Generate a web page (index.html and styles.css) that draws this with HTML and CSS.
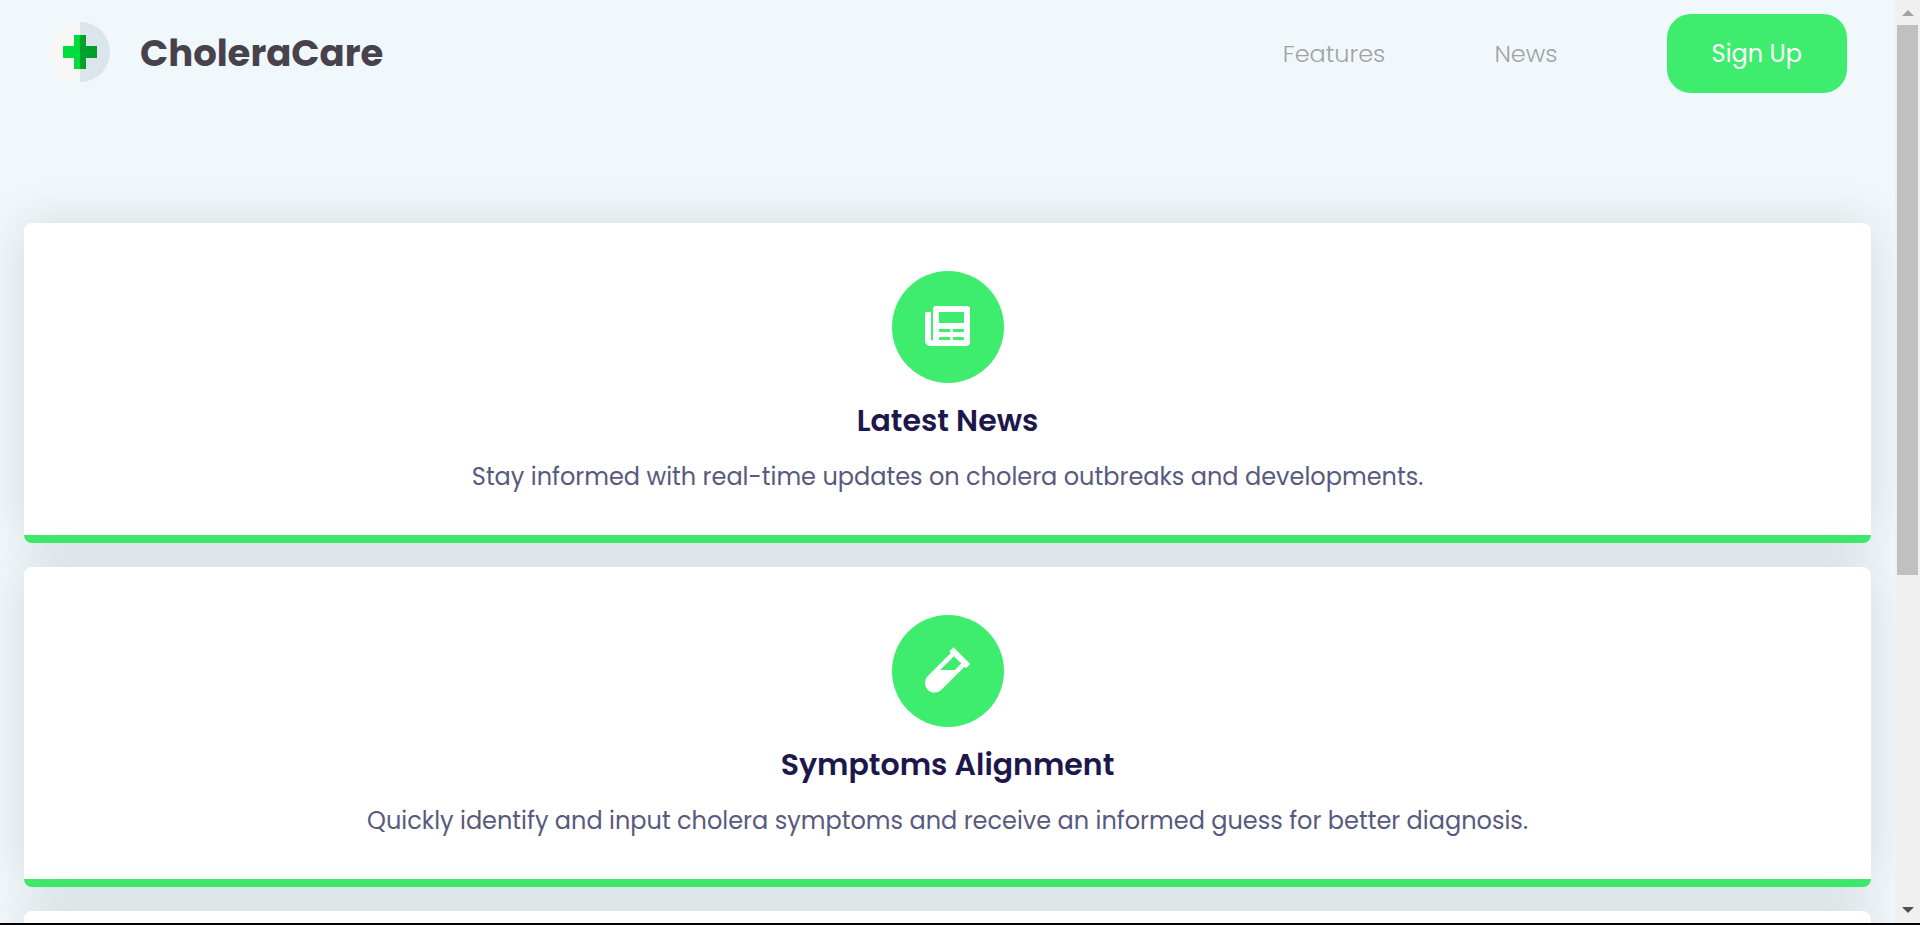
FILE: index.html
```html
<!DOCTYPE html>
<html lang="en">
<head>
<meta charset="utf-8">
<meta name="viewport" content="width=device-width, initial-scale=1">
<title>CholeraCare</title>
<link rel="stylesheet" href="styles.css">
</head>
<body>
<div class="shell">
  <div class="page">
    <header class="navbar">
      <a class="brand" href="#">
        <svg class="brand-logo" viewBox="0 0 60 60" aria-hidden="true">
          <path fill="#f7f7f8" d="M30 0a30 30 0 0 0 0 60z"/>
          <path fill="#dce4ec" d="M30 0a30 30 0 0 1 0 60z"/>
          <path fill="#00dc3c" d="M24 13h6v34h-6V36H13V24h11z"/>
          <path fill="#00a02d" d="M30 13h6v11h11v12H36v11h-6z"/>
        </svg>
        <span class="brand-name">CholeraCare</span>
      </a>
      <nav class="nav-links">
        <a class="nav-link" href="#features">Features</a>
        <a class="nav-link" href="#news">News</a>
        <button class="signup" type="button">Sign Up</button>
      </nav>
    </header>
    <main class="cards" id="features">
      <section class="card" id="news">
        <div class="card-icon">
          <svg width="45" height="40" viewBox="0 0 45 40" aria-hidden="true">
            <path fill="#fff" fill-rule="evenodd" d="M11 0h31a3 3 0 0 1 3 3v33a4 4 0 0 1-4 4H5a5 5 0 0 1-5-5V7.500a1.500 1.500 0 0 1 1.500-1.500H6v27.500a1 1 0 0 0 2 0V3a3 3 0 0 1 3-3zM14 6v11h25V6zM14 23v2l1 1h10v-3zM28 23v3h10l1-1v-2zM15 31l-1 1v2h11v-3zM28 31v3h11v-2l-1-1z"/>
          </svg>
        </div>
        <h2 class="card-title">Latest News</h2>
        <p class="card-text">Stay informed with real-time updates on cholera outbreaks and developments.</p>
      </section>
      <section class="card">
        <div class="card-icon">
          <svg width="45" height="48" viewBox="0 0 480 512" aria-hidden="true">
            <path fill="#fff" d="M477.700 186.100L309.500 18.300c-3.100-3.100-8.200-3.100-11.300 0l-34 33.900c-3.100 3.100-3.100 8.200 0 11.300l11.200 11.100L33 316.500c-38.800 38.700-45.100 102-9.400 143.500 20.600 24 49.500 36 78.400 35.900 26.400 0 52.800-10 72.900-30.100l246.300-245.700 11.200 11.100c3.100 3.100 8.200 3.100 11.300 0l34-33.900c3.100-3 3.100-8.100 0-11.200zM318 256H161l148-147.700 78.500 78.300L318 256z"/>
          </svg>
        </div>
        <h2 class="card-title">Symptoms Alignment</h2>
        <p class="card-text">Quickly identify and input cholera symptoms and receive an informed guess for better diagnosis.</p>
      </section>
      <section class="card"></section>
    </main>
  </div>
  <div class="scrollbar" aria-hidden="true">
    <svg class="scroll-arrow" width="12" height="6" viewBox="0 0 12 6"><path fill="#a3a3a3" d="M6 0l6 6H0z"/></svg>
    <div class="scroll-track"><div class="scroll-thumb"></div></div>
    <svg class="scroll-arrow" width="12" height="6" viewBox="0 0 12 6"><path fill="#505050" d="M0 0h12L6 6z"/></svg>
  </div>
</div>
</body>
</html>
```
FILE: styles.css
```css
* {
  box-sizing: border-box;
}

body {
  margin: 0;
  background: #f0f8fb;
  font-family: Poppins, Inter, "Liberation Sans", sans-serif;
}

.shell {
  display: flex;
  height: 100vh;
  overflow: hidden;
  border-bottom: 2px solid #000;
}

.page {
  flex: 1;
  min-width: 0;
  overflow: hidden;
}

.navbar {
  display: flex;
  align-items: center;
  justify-content: space-between;
  padding: 14px 48px 14px 50px;
}

.brand {
  display: flex;
  align-items: center;
  gap: 30px;
  margin-bottom: 2px;
  color: #47424c;
  text-decoration: none;
}

.brand-logo {
  width: 60px;
  height: 60px;
  margin-bottom: 2px;
}

.brand-name {
  font-size: 37px;
  line-height: 56px;
  font-weight: 700;
}

.nav-links {
  display: flex;
  align-items: center;
  gap: 109px;
}

.nav-link {
  color: #a2a2a2;
  font-size: 24px;
  font-weight: 300;
  text-decoration: none;
}

.signup {
  padding: 20px 45px;
  border: 0;
  border-radius: 24px;
  background: #3eed6e;
  color: #fff;
  font: inherit;
  font-size: 24px;
  line-height: 39px;
}

.cards {
  display: flex;
  flex-direction: column;
  gap: 24px;
  padding: 116px 24px 24px;
}

.card {
  display: flex;
  flex-direction: column;
  align-items: center;
  min-height: 320px;
  padding: 48px 24px 38px;
  border-bottom: 8px solid #3eea6c;
  border-radius: 8px;
  background: #fff;
  box-shadow: 0 0 50px rgba(0, 0, 0, 0.12);
  text-align: center;
}

.card-icon {
  display: grid;
  place-items: center;
  width: 112px;
  height: 112px;
  padding-bottom: 2px;
  border-radius: 50%;
  background: #3eed6e;
}

.card-title {
  margin: 14px 0 12px;
  color: #1e174b;
  font-size: 30px;
  line-height: 48px;
  font-weight: 600;
}

.card-text {
  margin: 0;
  color: #575a7e;
  font-size: 24px;
  line-height: 40px;
}

.scrollbar {
  display: flex;
  flex-direction: column;
  align-items: center;
  width: 25px;
  padding: 10px 2px;
  background: #f0f0f0;
}

.scroll-track {
  flex: 1;
  align-self: stretch;
  padding: 9px 0;
}

.scroll-thumb {
  height: 63%;
  background: #c0c0c0;
}
```
